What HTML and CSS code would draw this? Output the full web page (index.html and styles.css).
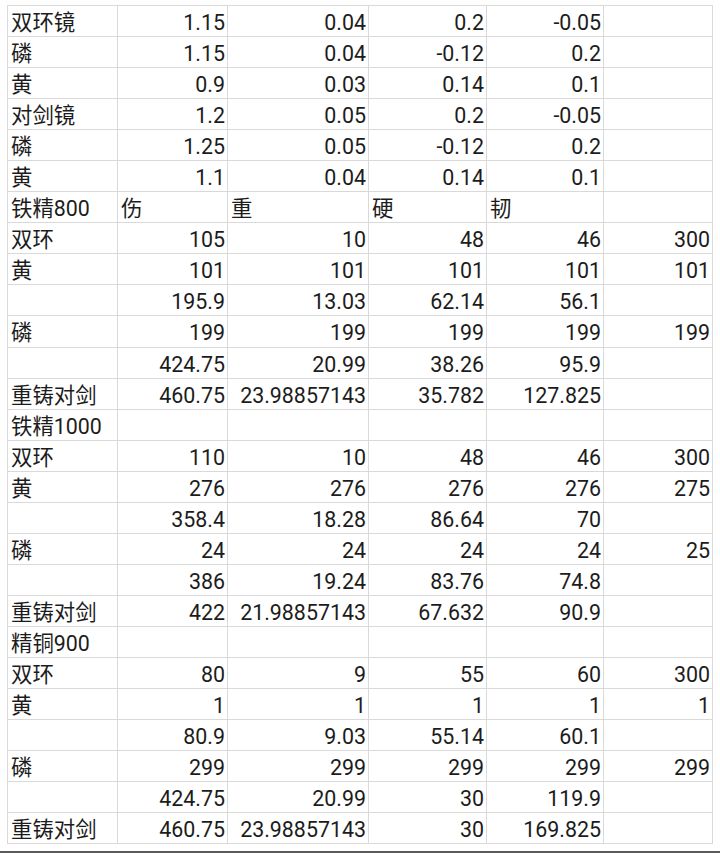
FILE: index.html
```html
<!DOCTYPE html>
<html lang="zh">
<head>
<meta charset="utf-8">
<link rel="stylesheet" href="styles.css">
</head>
<body>
<table class="sheet">
<colgroup><col class="c1"><col class="c2"><col class="c3"><col class="c4"><col class="c5"><col class="c6"></colgroup>
<tr><td>双环镜</td><td class="n">1.15</td><td class="n">0.04</td><td class="n">0.2</td><td class="n">-0.05</td><td></td></tr>
<tr><td>磷</td><td class="n">1.15</td><td class="n">0.04</td><td class="n">-0.12</td><td class="n">0.2</td><td></td></tr>
<tr><td>黄</td><td class="n">0.9</td><td class="n">0.03</td><td class="n">0.14</td><td class="n">0.1</td><td></td></tr>
<tr><td>对剑镜</td><td class="n">1.2</td><td class="n">0.05</td><td class="n">0.2</td><td class="n">-0.05</td><td></td></tr>
<tr><td>磷</td><td class="n">1.25</td><td class="n">0.05</td><td class="n">-0.12</td><td class="n">0.2</td><td></td></tr>
<tr><td>黄</td><td class="n">1.1</td><td class="n">0.04</td><td class="n">0.14</td><td class="n">0.1</td><td></td></tr>
<tr><td>铁精800</td><td>伤</td><td>重</td><td>硬</td><td>韧</td><td></td></tr>
<tr><td>双环</td><td class="n">105</td><td class="n">10</td><td class="n">48</td><td class="n">46</td><td class="n">300</td></tr>
<tr><td>黄</td><td class="n">101</td><td class="n">101</td><td class="n">101</td><td class="n">101</td><td class="n">101</td></tr>
<tr><td></td><td class="n">195.9</td><td class="n">13.03</td><td class="n">62.14</td><td class="n">56.1</td><td></td></tr>
<tr><td>磷</td><td class="n">199</td><td class="n">199</td><td class="n">199</td><td class="n">199</td><td class="n">199</td></tr>
<tr><td></td><td class="n">424.75</td><td class="n">20.99</td><td class="n">38.26</td><td class="n">95.9</td><td></td></tr>
<tr><td>重铸对剑</td><td class="n">460.75</td><td class="n">23.98857143</td><td class="n">35.782</td><td class="n">127.825</td><td></td></tr>
<tr><td>铁精1000</td><td></td><td></td><td></td><td></td><td></td></tr>
<tr><td>双环</td><td class="n">110</td><td class="n">10</td><td class="n">48</td><td class="n">46</td><td class="n">300</td></tr>
<tr><td>黄</td><td class="n">276</td><td class="n">276</td><td class="n">276</td><td class="n">276</td><td class="n">275</td></tr>
<tr><td></td><td class="n">358.4</td><td class="n">18.28</td><td class="n">86.64</td><td class="n">70</td><td></td></tr>
<tr><td>磷</td><td class="n">24</td><td class="n">24</td><td class="n">24</td><td class="n">24</td><td class="n">25</td></tr>
<tr><td></td><td class="n">386</td><td class="n">19.24</td><td class="n">83.76</td><td class="n">74.8</td><td></td></tr>
<tr><td>重铸对剑</td><td class="n">422</td><td class="n">21.98857143</td><td class="n">67.632</td><td class="n">90.9</td><td></td></tr>
<tr><td>精铜900</td><td></td><td></td><td></td><td></td><td></td></tr>
<tr><td>双环</td><td class="n">80</td><td class="n">9</td><td class="n">55</td><td class="n">60</td><td class="n">300</td></tr>
<tr><td>黄</td><td class="n">1</td><td class="n">1</td><td class="n">1</td><td class="n">1</td><td class="n">1</td></tr>
<tr><td></td><td class="n">80.9</td><td class="n">9.03</td><td class="n">55.14</td><td class="n">60.1</td><td></td></tr>
<tr><td>磷</td><td class="n">299</td><td class="n">299</td><td class="n">299</td><td class="n">299</td><td class="n">299</td></tr>
<tr><td></td><td class="n">424.75</td><td class="n">20.99</td><td class="n">30</td><td class="n">119.9</td><td></td></tr>
<tr><td>重铸对剑</td><td class="n">460.75</td><td class="n">23.98857143</td><td class="n">30</td><td class="n">169.825</td><td></td></tr>
</table>
<div class="edge"></div>
</body>
</html>
```
FILE: styles.css
```css
html, body {
  margin: 0;
  padding: 0;
  background: #ffffff;
  overflow: hidden;
}
body {
  padding: 5px 0 0 7px;
  font-family: Roboto, "Noto Sans CJK SC", sans-serif;
  font-size: 21.4px;
  color: #1c1c1c;
}
.sheet {
  border-collapse: collapse;
  table-layout: fixed;
  width: 705px;
}
.c1 { width: 110px; }
.c2 { width: 110px; }
.c3 { width: 141px; }
.c4 { width: 118px; }
.c5 { width: 117px; }
.c6 { width: 109px; }
.sheet tr {
  height: 31.05px;
}
.sheet td {
  border: 1px solid #d9d9d9;
  padding: 3px 3px 0 3px;
  line-height: 27px;
  white-space: nowrap;
  overflow: hidden;
  vertical-align: middle;
}
.sheet td.n {
  text-align: right;
  padding-right: 2px;
}
.edge {
  margin: 7px 0 0 -7px;
  height: 2px;
  background: #5a5a5a;
}
```
